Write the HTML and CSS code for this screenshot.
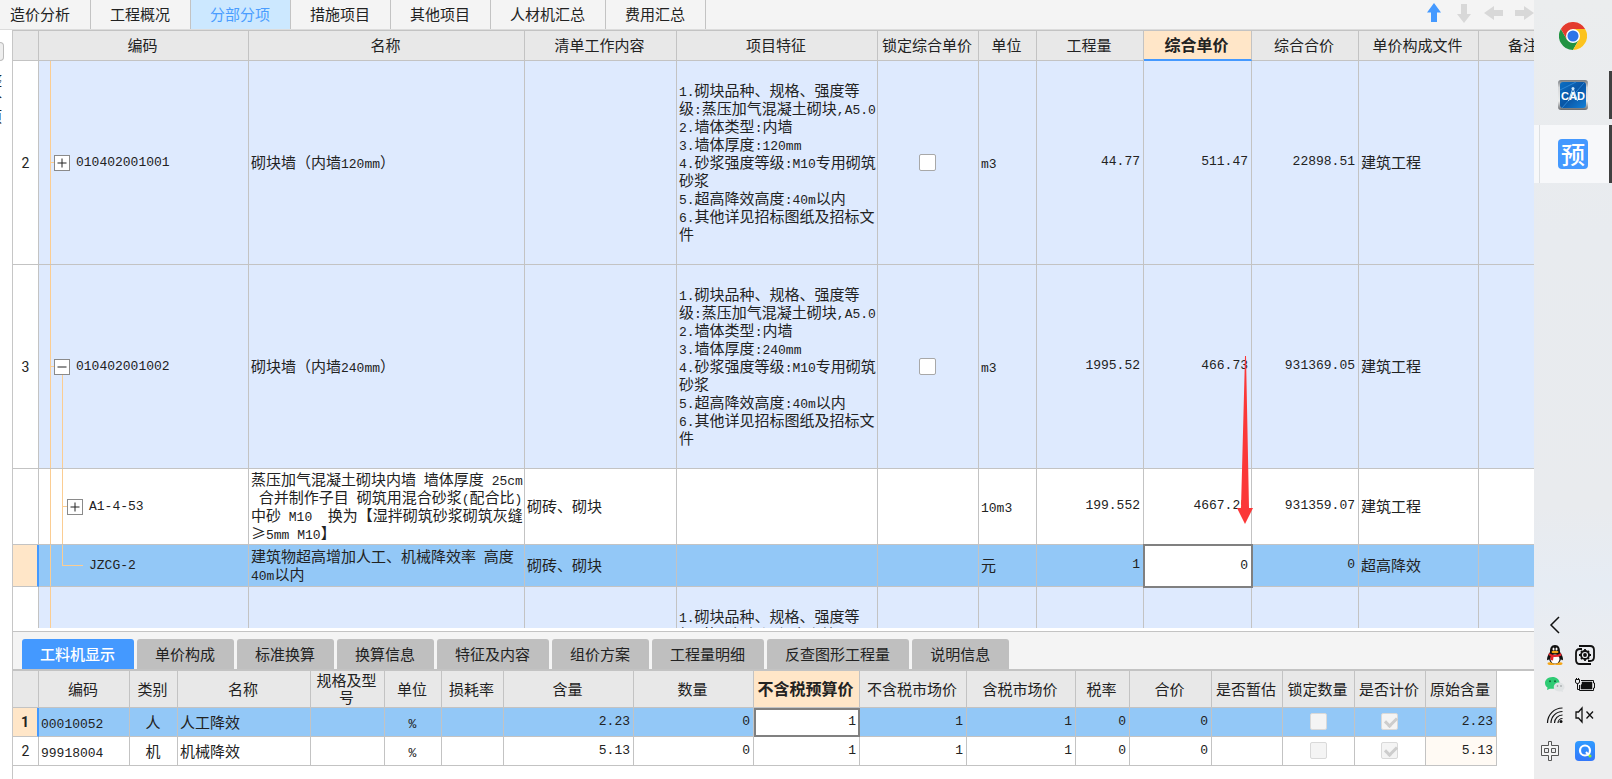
FILE: index.html
```html
<!DOCTYPE html>
<html lang="zh-CN">
<head>
<meta charset="utf-8">
<title>分部分项</title>
<link rel="stylesheet" href="styles.css">
</head>
<body>
<main class="app">
  <nav class="top-tabs">
    <button class="top-tab">造价分析</button>
    <button class="top-tab">工程概况</button>
    <button class="top-tab active">分部分项</button>
    <button class="top-tab">措施项目</button>
    <button class="top-tab">其他项目</button>
    <button class="top-tab">人材机汇总</button>
    <button class="top-tab">费用汇总</button>
    <div class="move-tools">
      <button class="move on" aria-label="上移"><svg viewBox="0 0 20 20" width="20" height="20"><path d="M10 0L17 9.500H13V19H7V9.500H3Z"/></svg></button>
      <button class="move" aria-label="下移"><svg viewBox="0 0 20 20" width="20" height="20"><path d="M10 20L17 11H13V1H7V11H3Z"/></svg></button>
      <button class="move" aria-label="左移"><svg viewBox="0 0 20 20" width="20" height="20"><path d="M0 10L10 3V7H19V13H10V17Z"/></svg></button>
      <button class="move" aria-label="右移"><svg viewBox="0 0 20 20" width="20" height="20"><path d="M20 10L10 3V7H1V13H10V17Z"/></svg></button>
    </div>
  </nav>

  <div class="workspace">
    <aside class="side-strip">
      <button class="side-toggle" aria-label="展开"></button>
      <div class="side-label"><span>整</span><span>个</span><span>项</span></div>
    </aside>

    <div class="panes">
      <section class="pane-main">
        <table class="grid grid-main">
          <colgroup>
            <col class="m0"><col class="m1"><col class="m2"><col class="m3"><col class="m4"><col class="m5"><col class="m6"><col class="m7"><col class="m8"><col class="m9"><col class="m10"><col class="m11">
          </colgroup>
          <thead>
            <tr class="head-row">
              <th></th><th>编码</th><th>名称</th><th>清单工作内容</th><th>项目特征</th><th>锁定综合单价</th><th>单位</th><th>工程量</th><th class="current underlined">综合单价</th><th>综合合价</th><th>单价构成文件</th><th>备注</th>
            </tr>
          </thead>
          <tbody>
            <tr class="item tall">
              <td class="idx">2</td>
              <td class="tree closed"><div class="node"><button class="expander" aria-label="展开"><svg viewBox="0 0 14 14" width="14" height="14"><path d="M2.500 7H11.500M7 2.500V11.500"/></svg></button><span class="n">010402001001</span></div></td>
              <td>砌块墙（内墙<span class="n">120mm</span>）</td>
              <td></td>
              <td><span class="n">1.</span>砌块品种、规格、强度等<br>级<span class="n">:</span>蒸压加气混凝土砌块<span class="n">,A5.0</span><br><span class="n">2.</span>墙体类型<span class="n">:</span>内墙<br><span class="n">3.</span>墙体厚度<span class="n">:120mm</span><br><span class="n">4.</span>砂浆强度等级<span class="n">:M10</span>专用砌筑<br>砂浆<br><span class="n">5.</span>超高降效高度<span class="n">:40m</span>以内<br><span class="n">6.</span>其他详见招标图纸及招标文<br>件</td>
              <td class="mid"><input class="tick" type="checkbox" aria-label="锁定综合单价"></td>
              <td><span class="n">m3</span></td>
              <td class="num">44.77</td><td class="num">511.47</td><td class="num">22898.51</td><td>建筑工程</td><td></td>
            </tr>
            <tr class="item tall">
              <td class="idx">3</td>
              <td class="tree opened"><div class="node"><button class="expander" aria-label="收起"><svg viewBox="0 0 14 14" width="14" height="14"><path d="M2.500 7H11.500"/></svg></button><span class="n">010402001002</span></div></td>
              <td>砌块墙（内墙<span class="n">240mm</span>）</td>
              <td></td>
              <td><span class="n">1.</span>砌块品种、规格、强度等<br>级<span class="n">:</span>蒸压加气混凝土砌块<span class="n">,A5.0</span><br><span class="n">2.</span>墙体类型<span class="n">:</span>内墙<br><span class="n">3.</span>墙体厚度<span class="n">:240mm</span><br><span class="n">4.</span>砂浆强度等级<span class="n">:M10</span>专用砌筑<br>砂浆<br><span class="n">5.</span>超高降效高度<span class="n">:40m</span>以内<br><span class="n">6.</span>其他详见招标图纸及招标文<br>件</td>
              <td class="mid"><input class="tick" type="checkbox" aria-label="锁定综合单价"></td>
              <td><span class="n">m3</span></td>
              <td class="num">1995.52</td><td class="num">466.73</td><td class="num">931369.05</td><td>建筑工程</td><td></td>
            </tr>
            <tr class="sub">
              <td class="idx"></td>
              <td class="tree child"><div class="node level2"><button class="expander" aria-label="展开"><svg viewBox="0 0 14 14" width="14" height="14"><path d="M2.500 7H11.500M7 2.500V11.500"/></svg></button><span class="n">A1-4-53</span></div></td>
              <td>蒸压加气混凝土砌块内墙<span class="n">&nbsp;</span>墙体厚度<span class="n">&nbsp;25cm</span><br><span class="n">&nbsp;</span>合并制作子目<span class="n">&nbsp;</span>砌筑用混合砂浆<span class="n">(</span>配合比<span class="n">)</span><br>中砂<span class="n">&nbsp;M10&nbsp;&nbsp;</span>换为【湿拌砌筑砂浆砌筑灰缝<br>≥<span class="n">5mm&nbsp;M10</span>】</td>
              <td>砌砖、砌块</td><td></td><td></td>
              <td><span class="n">10m3</span></td>
              <td class="num">199.552</td><td class="num">4667.25</td><td class="num">931359.07</td><td>建筑工程</td><td></td>
            </tr>
            <tr class="leaf selected">
              <td class="idx"></td>
              <td class="tree last"><div class="node leaf-node"><span class="n">JZCG-2</span></div></td>
              <td>建筑物超高增加人工、机械降效率<span class="n">&nbsp;</span>高度<br><span class="n">40m</span>以内</td>
              <td>砌砖、砌块</td><td></td><td></td>
              <td>元</td>
              <td class="num">1</td><td class="num editing"><input class="cell-input" type="text" value="0" aria-label="综合单价"></td><td class="num">0</td><td>超高降效</td><td></td>
            </tr>
            <tr class="item tall">
              <td class="idx"></td>
              <td class="tree trunk"></td>
              <td></td><td></td>
              <td><span class="n">1.</span>砌块品种、规格、强度等<br>级<span class="n">:</span>蒸压加气混凝土砌块<span class="n">,A5.0</span><br><span class="n">2.</span>墙体类型<span class="n">:</span>内墙<br><br><br><br><br><br><br></td>
              <td></td><td></td><td></td><td></td><td></td><td></td><td></td>
            </tr>
          </tbody>
        </table>
        <svg class="marker" viewBox="0 0 16 168" width="16" height="168" aria-hidden="true"><path d="M8 0H9L12 152H16L8 168L0 152H4Z"/></svg>
      </section>

      <nav class="sub-tabs">
        <button class="sub-tab active">工料机显示</button>
        <button class="sub-tab">单价构成</button>
        <button class="sub-tab">标准换算</button>
        <button class="sub-tab">换算信息</button>
        <button class="sub-tab">特征及内容</button>
        <button class="sub-tab">组价方案</button>
        <button class="sub-tab">工程量明细</button>
        <button class="sub-tab">反查图形工程量</button>
        <button class="sub-tab">说明信息</button>
      </nav>

      <section class="pane-detail">
        <table class="grid grid-detail">
          <colgroup>
            <col class="d0"><col class="d1"><col class="d2"><col class="d3"><col class="d4"><col class="d5"><col class="d6"><col class="d7"><col class="d8"><col class="d9"><col class="d10"><col class="d11"><col class="d12"><col class="d13"><col class="d14"><col class="d15"><col class="d16"><col class="d17">
          </colgroup>
          <thead>
            <tr class="head-row">
              <th></th><th>编码</th><th>类别</th><th>名称</th><th>规格及型号</th><th>单位</th><th>损耗率</th><th>含量</th><th>数量</th><th class="current">不含税预算价</th><th>不含税市场价</th><th>含税市场价</th><th>税率</th><th>合价</th><th>是否暂估</th><th>锁定数量</th><th>是否计价</th><th>原始含量</th>
            </tr>
          </thead>
          <tbody>
            <tr class="selected">
              <td class="idx">1</td><td><span class="n">00010052</span></td><td class="mid">人</td><td>人工降效</td><td></td><td class="mid"><span class="n">%</span></td><td></td>
              <td class="num">2.23</td><td class="num">0</td><td class="num editing topped"><input class="cell-input" type="text" value="1" aria-label="不含税预算价"></td><td class="num">1</td><td class="num">1</td><td class="num">0</td><td class="num">0</td><td></td>
              <td class="mid"><input class="tick" type="checkbox" disabled aria-label="锁定数量"></td>
              <td class="mid"><input class="tick" type="checkbox" checked disabled aria-label="是否计价"></td>
              <td class="num">2.23</td>
            </tr>
            <tr>
              <td class="idx">2</td><td><span class="n">99918004</span></td><td class="mid">机</td><td>机械降效</td><td></td><td class="mid"><span class="n">%</span></td><td></td>
              <td class="num">5.13</td><td class="num">0</td><td class="num">1</td><td class="num">1</td><td class="num">1</td><td class="num">0</td><td class="num">0</td><td></td>
              <td class="mid"><input class="tick" type="checkbox" disabled aria-label="锁定数量"></td>
              <td class="mid"><input class="tick" type="checkbox" checked disabled aria-label="是否计价"></td>
              <td class="num origin">5.13</td>
            </tr>
          </tbody>
        </table>
      </section>
    </div>
  </div>
</main>

<aside class="taskbar">
  <div class="task-list">
    <button class="task" aria-label="Chrome">
      <svg viewBox="0 0 48 48" width="28" height="28">
        <circle cx="24" cy="24" r="24" fill="#fff"/>
        <path d="M24 48A24 24 0 0 1 3.200 12L13.600 30L34.400 30Z" fill="#229342"/>
        <path d="M24 12H44.800A24 24 0 0 0 3.200 12L13.600 30Z" fill="#e33b2e"/>
        <path d="M34.400 30L24 48A24 24 0 0 0 44.800 12H24Z" fill="#fcc31e"/>
        <circle cx="24" cy="24" r="12" fill="#fff"/>
        <circle cx="24" cy="24" r="9.500" fill="#2c74e8"/>
      </svg>
    </button>
    <button class="task running" aria-label="CAD">
      <svg viewBox="0 0 30 30" width="30" height="30">
        <defs><linearGradient id="steel" x1="0" y1="0" x2="0" y2="1"><stop offset="0" stop-color="#777b80"/><stop offset=".25" stop-color="#d6d8da"/><stop offset=".7" stop-color="#eceded"/><stop offset="1" stop-color="#66696d"/></linearGradient>
        <linearGradient id="cad" x1="0" y1="0" x2="1" y2="1"><stop offset="0" stop-color="#0c6fc4"/><stop offset=".5" stop-color="#0a55a4"/><stop offset="1" stop-color="#1280d8"/></linearGradient></defs>
        <rect width="30" height="30" rx="3" fill="url(#steel)"/>
        <rect x="2" y="2" width="26" height="26" rx="3" fill="url(#cad)"/>
        <path d="M4 28L26 3M2 10L18 2" stroke="#2c86d4" fill="none"/>
        <path d="M15 8L10.500 21M15 8L19.500 21" stroke="#b9dcf7" fill="none"/><circle cx="15" cy="8.500" r="1.500" fill="#cfe8fb"/>
        <text x="15" y="20" text-anchor="middle" class="cad-text">CAD</text>
      </svg>
    </button>
    <button class="task current-task"><span class="budget-icon">预</span></button>
  </div>

  <div class="tray">
    <button class="tray-item" aria-label="更多"><svg viewBox="0 0 20 20" width="20" height="20"><path d="M14 2L6 10L14 18" fill="none" stroke="#111" stroke-width="1.500"/></svg></button>
    <span></span>
    <button class="tray-item" aria-label="QQ"><svg viewBox="0 0 20 20" width="20" height="20">
      <ellipse cx="6.500" cy="18.500" rx="4" ry="1.500" fill="#f5a516"/><ellipse cx="13.500" cy="18.500" rx="4" ry="1.500" fill="#f5a516"/>
      <path d="M10 0C6 0 5 3 5 7C3 10 2 12 2 14.500C2.500 16 4 14.500 4 14C5 17.500 7 18.500 10 18.500S15 17.500 16 14C16 14.500 17.500 16 18 14.500C18 12 17 10 15 7C15 3 14 0 10 0Z" fill="#111"/>
      <ellipse cx="10" cy="14" rx="4.500" ry="4.500" fill="#fff"/><ellipse cx="8.500" cy="4" rx="1" ry="1.600" fill="#fff"/><ellipse cx="11.500" cy="4" rx="1" ry="1.600" fill="#fff"/>
      <ellipse cx="10" cy="7" rx="3.500" ry="1.200" fill="#f5a516"/><path d="M4 8Q10 12 16 8L16.500 10.500Q13 12.500 8.500 12L8 15.500L5.500 15V11Q4 10.500 3.500 10Z" fill="#e3262b"/></svg></button>
    <button class="tray-item" aria-label="设置"><svg viewBox="0 0 20 20" width="20" height="20" fill="none" stroke="#111" stroke-width="1.800">
      <path d="M4 1H15Q19 1 19 5V12Q19 16 15 16M16 19H5Q1 19 1 15V8Q1 4 5 4M5 4H7M15 16H13"/><circle cx="10" cy="10" r="4"/><circle cx="10" cy="10" r="1" fill="#111"/><path d="M10 4V6M10 14V16M4 10H6M14 10H16M6 6L7 7M14 6L13 7M6 14L7 13M14 14L13 13"/></svg></button>
    <button class="tray-item" aria-label="微信"><svg viewBox="0 0 20 20" width="20" height="20">
      <path d="M7.500 2C3 2 0 4.800 0 8C0 10 1 11.500 2.500 12.500L2 15L5 13.700C9 14.500 14.500 12.500 14.500 8C14.500 4.500 11.500 2 7.500 2Z" fill="#2fcb74"/>
      <circle cx="5" cy="6.200" r="1" fill="#13683b"/><circle cx="10" cy="6.200" r="1" fill="#13683b"/>
      <path d="M14 7.500C11 7.500 8.800 9.500 8.800 12C8.800 15 12 17 16 16.200L18 17.200L17.700 15.400C21.500 12.500 19 7.500 14 7.500Z" fill="#e0e3e4"/><circle cx="12.500" cy="11" r=".8" fill="#8b9191"/><circle cx="16" cy="11" r=".8" fill="#8b9191"/></svg></button>
    <button class="tray-item" aria-label="电池"><svg viewBox="0 0 20 20" width="20" height="20"><path d="M6 5.500H18.500V8H19.500V13H18.500V15.500H4.500V10" fill="none" stroke="#111"/><path d="M7 7H17V14H6V10L7 9Z" fill="#111" stroke="#111" stroke-width=".5"/><path d="M1.500 3V4.500M3.500 3V4.500M.5 4.500H4.500V7Q4.500 8.500 2.500 8.500Q.5 8.500.5 7ZM2.500 8.500V14.500H4.500" fill="none" stroke="#111"/></svg></button>
    <button class="tray-item" aria-label="无线网络"><svg viewBox="0 0 20 20" width="20" height="20" fill="none" stroke="#111" stroke-width="1.200"><path d="M2.500 18A15 15 0 0 1 17.500 3M6 18A11.500 11.500 0 0 1 17.500 6.500M9.500 18A8 8 0 0 1 17.500 10M13 18A4.500 4.500 0 0 1 17.500 13.500"/><circle cx="16" cy="16.500" r="1.500" fill="#111" stroke="none"/></svg></button>
    <button class="tray-item" aria-label="静音"><svg viewBox="0 0 20 20" width="20" height="20" fill="none" stroke="#111" stroke-width="1.300"><path d="M1 7V13H3.500L7 17V3L3.500 7ZM11.500 6.500L18 13.500M18 6.500L11.500 13.500"/></svg></button>
    <button class="tray-item ime" aria-label="中文输入"><svg viewBox="0 0 20 20" width="20" height="20" fill="#f4f4f4" stroke="#555"><path d="M8.500.5H11.500V4.500H18.500V14.500H11.500V19.500H8.500V14.500H1.500V4.500H8.500ZM4.500 7.500V11.500H8.500V7.500ZM11.500 7.500V11.500H15.500V7.500Z" fill-rule="evenodd"/></svg></button>
    <button class="tray-item" aria-label="浏览器"><span class="q-icon"><svg viewBox="0 0 20 20" width="20" height="20"><circle cx="10" cy="9.500" r="5" fill="none" stroke="#fff" stroke-width="2.200"/><path d="M11 11L14 14.500" stroke="#fff" stroke-width="2"/><circle cx="15" cy="15" r="1.500" fill="#8ff02c"/></svg></span></button>
  </div>
</aside>
</body>
</html>
```
FILE: styles.css
```css
* { box-sizing: border-box; }

body {
  margin: 0;
  height: 100vh;
  display: flex;
  overflow: hidden;
  background: #fff;
  color: #222;
  font: 15px/18px "Noto Sans CJK SC", sans-serif;
}

button {
  margin: 0;
  padding: 0;
  border: 0;
  background: none;
  color: inherit;
  font: inherit;
}

svg { display: block; }

.app {
  flex: 1;
  min-width: 0;
  display: flex;
  flex-direction: column;
}

/* Top tabs */
.top-tabs {
  display: flex;
  height: 30px;
  flex: none;
  background: #f4f4f4;
  border-bottom: 1px solid #dcdcdc;
}
.top-tab {
  padding: 0 20px 2px 19px;
  border-right: 1px solid #c3c3c3;
  white-space: nowrap;
}
.top-tab:first-child { padding-left: 10px; }
.top-tab.active { background: #cce8ff; color: #4a9dff; }
.move-tools {
  display: flex;
  gap: 10px;
  margin-left: auto;
  padding-top: 3px;
}
.move { height: 20px; fill: #d8d8d8; }
.move.on { fill: #4499ff; }

/* Side strip */
.workspace {
  flex: 1;
  min-height: 0;
  display: flex;
}
.side-strip { width: 12px; flex: none; padding-top: 12px; }
.side-toggle {
  display: block;
  width: 4px;
  height: 19px;
  border: 1px solid #bbb;
  border-left: 0;
  border-radius: 0 4px 4px 0;
  background: #eee;
}
.side-label {
  display: flex;
  flex-direction: column;
  align-items: flex-end;
  width: 2px;
  margin-top: 10px;
  overflow: hidden;
}
.panes {
  flex: 1;
  min-width: 0;
  display: flex;
  flex-direction: column;
  border-left: 1px solid #c6c6c6;
}
.pane-main {
  flex: 1;
  min-height: 0;
  overflow: hidden;
  position: relative;
  border-top: 1px solid #c3c3c3;
}

/* Grids */
.grid {
  table-layout: fixed;
  border-collapse: separate;
  border-spacing: 0;
}
.grid-main { width: 1557px; }
.grid-detail { width: 1484px; }
.grid th, .grid td {
  padding: 0 3px 1px 2px;
  border-right: 1px solid #c3c3c3;
  border-bottom: 1px solid #c3c3c3;
  white-space: nowrap;
  text-align: left;
  vertical-align: middle;
}
.grid th {
  padding: 0 3px 2px 1px;
  background: #e8e8e8;
  font-weight: 400;
  text-align: center;
  white-space: normal;
  line-height: 17px;
}
.grid th.current { background: #ffe6c8; font-size: 16px; font-weight: 700; }
.grid th.underlined { border-bottom: 2px solid #4499ff; }
.grid-main .head-row { height: 30px; }
.grid-detail .head-row { height: 37px; }
.grid-detail tbody tr { height: 29px; }

.m0 { width: 26px; } .m1 { width: 210px; } .m2 { width: 276px; } .m3 { width: 152px; }
.m4 { width: 201px; } .m5 { width: 101px; } .m6 { width: 58px; } .m7 { width: 107px; }
.m8 { width: 108px; } .m9 { width: 107px; } .m10 { width: 120px; } .m11 { width: 91px; }

.d0 { width: 26px; } .d1 { width: 91px; } .d2 { width: 48px; } .d3 { width: 133px; }
.d4 { width: 74px; } .d5 { width: 57px; } .d6 { width: 62px; } .d7 { width: 130px; }
.d8 { width: 120px; } .d9 { width: 106px; } .d10 { width: 107px; } .d11 { width: 109px; }
.d12 { width: 54px; } .d13 { width: 82px; } .d14 { width: 71px; } .d15 { width: 72px; }
.d16 { width: 71px; } .d17 { width: 71px; }

.item { background: #deeafe; }
.tall { height: 204px; }
.sub { height: 76px; }
.leaf { height: 42px; }
.selected { background: #93c8f7; }

.n, .grid td.num, .cell-input { font-family: "Liberation Mono", monospace; font-size: 13px; }
.n { line-height: 1px; }
.grid td.num { text-align: right; }
.grid td.mid { text-align: center; }
.grid td.origin { background: #fffaf4; }
.grid td.idx {
  padding: 0;
  background: #fff;
  font-family: Roboto, sans-serif;
  font-size: 14px;
  text-align: center;
}
.grid .selected td.idx {
  background: #ffe6c8;
  border-right: 2px solid #4499ff;
  font-weight: 700;
}
.grid td.editing {
  background: #fff;
  outline: 2px solid #808080;
  outline-offset: -1px;
}
.grid td.topped { box-shadow: inset 0 2px #4499ff; outline-offset: -2px; }
.cell-input {
  display: block;
  width: 100%;
  padding: 0;
  border: 0;
  outline: 0;
  background: transparent;
  color: inherit;
  text-align: right;
}

/* Tree column */
.grid td.tree {
  --rail: linear-gradient(#fbcd92, #fbcd92);
  padding: 0;
  background-repeat: no-repeat;
}
.grid td.trunk { background-image: var(--rail); background-position: 11px 0; background-size: 1px 100%; }
.grid td.closed {
  background-image: var(--rail), var(--rail);
  background-position: 11px 0, 11px 50%;
  background-size: 1px 100%, 5px 1px;
}
.grid td.opened {
  background-image: var(--rail), var(--rail), var(--rail);
  background-position: 11px 0, 11px 50%, 23px 100%;
  background-size: 1px 100%, 5px 1px, 1px 50%;
}
.grid td.child {
  background-image: var(--rail), var(--rail), var(--rail);
  background-position: 11px 0, 23px 50%, 23px 0;
  background-size: 1px 100%, 5px 1px, 1px 100%;
}
.grid td.last {
  background-image: var(--rail), var(--rail), var(--rail);
  background-position: 11px 0, 23px 50%, 23px 0;
  background-size: 1px 100%, 21px 1px, 1px 50%;
}
.node {
  display: flex;
  align-items: center;
  gap: 6px;
  padding-left: 15px;
}
.level2 { padding-left: 28px; }
.leaf-node { padding-left: 50px; }
.expander {
  width: 16px;
  height: 16px;
  border: 1px solid #8a8a8a;
  background: #fff;
}
.expander path { stroke: #222; stroke-width: 1; fill: none; }

.tick {
  appearance: none;
  display: block;
  width: 17px;
  height: 17px;
  margin: 0 auto;
  border: 1px solid #a8a8a8;
  border-radius: 2px;
  background: #fff;
}
.tick:disabled { border-color: #d9d9d9; background: #f4f4f4; }
.tick:checked::before {
  content: "";
  display: block;
  width: 9px;
  height: 5px;
  margin: 3px 0 0 3px;
  border: solid #cdcdcd;
  border-width: 0 0 3px 3px;
  transform: rotate(-45deg);
}

/* Annotation arrow over the grid */
.marker {
  position: absolute;
  left: 1224px;
  top: 325px;
  fill: #fb3838;
}

/* Detail tabs */
.sub-tabs {
  flex: none;
  display: flex;
  gap: 3px;
  margin-top: 3px;
  padding: 7px 9px 0;
  border-top: 1px solid #c3c3c3;
  border-bottom: 2px solid #c3c3c3;
  background: #f4f4f4;
}
.sub-tab {
  height: 30px;
  padding: 0 19px 0 18px;
  border-radius: 3px 3px 0 0;
  background: #bfbfbf;
  white-space: nowrap;
}
.sub-tab.active { background: #4499ff; color: #fff; font-weight: 500; }
.pane-detail { flex: none; height: 108px; overflow: hidden; }

/* Taskbar */
.taskbar {
  width: 78px;
  flex: none;
  display: flex;
  flex-direction: column;
  justify-content: space-between;
  background: linear-gradient(#ebedee, #e8ebef 30%, #e9ebee 65%, #e6ecf4 75%, #ededee 88%);
}
.task-list {
  display: flex;
  flex-direction: column;
  gap: 1px;
  padding-top: 7px;
}
.task {
  height: 58px;
  display: flex;
  align-items: center;
  justify-content: center;
  position: relative;
}
.running::after, .current-task::after {
  content: "";
  position: absolute;
  right: 0;
  top: 5px;
  bottom: 5px;
  width: 3px;
  background: #404040;
}
.current-task { background: linear-gradient(90deg, #f7f8fa 5px, #dcdfe2 5px, #dcdfe2 6px, #f7f8fa 6px); }
.current-task::after { top: 0; bottom: 0; }
.cad-text { font: 700 11px "Liberation Sans", sans-serif; fill: #fff; }
.budget-icon {
  width: 30px;
  height: 30px;
  border-radius: 4px;
  background: #4499ff;
  color: #fff;
  font-size: 24px;
  font-weight: 500;
  line-height: 29px;
  text-align: center;
}
.tray {
  display: grid;
  grid-template-columns: 30px 30px;
  grid-template-rows: repeat(4, 30px) 42px;
  padding: 0 0 7px 6px;
}
.tray-item { display: flex; align-items: center; justify-content: center; }
.ime { justify-content: flex-start; }
.q-icon { border-radius: 4px; background: linear-gradient(#2f9bff, #3377fa); }
```
